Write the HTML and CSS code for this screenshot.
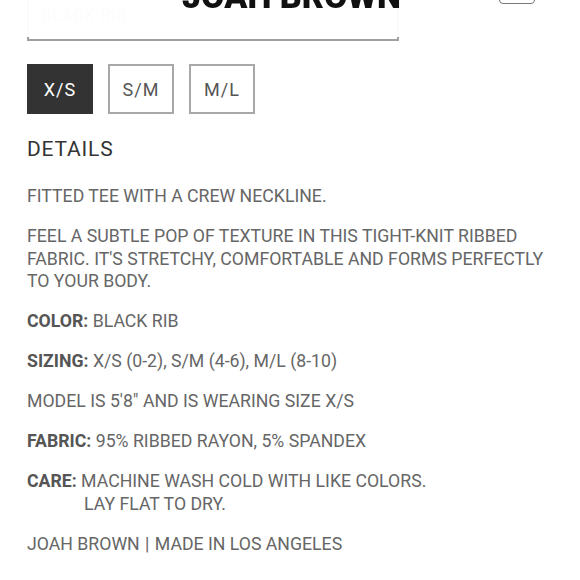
FILE: index.html
```html
<!DOCTYPE html>
<html>
<head>
<meta charset="utf-8">
<link rel="stylesheet" href="styles.css">
</head>
<body>
<header class="topbar">
  <div class="logo">JOAH BROWN</div>
  <div class="cart"></div>
</header>
<main class="product">
  <div class="select">BLACK RIB</div>
  <div class="sizes">
    <button class="size active">X/S</button>
    <button class="size">S/M</button>
    <button class="size">M/L</button>
  </div>
  <h2 class="details-title">DETAILS</h2>
  <div class="details">
    <p>FITTED TEE WITH A CREW NECKLINE.</p>
    <p>FEEL A SUBTLE POP OF TEXTURE IN THIS TIGHT-KNIT RIBBED<br>FABRIC. IT'S STRETCHY, COMFORTABLE AND FORMS PERFECTLY<br>TO YOUR BODY.</p>
    <p><b>COLOR:</b> BLACK RIB</p>
    <p><b>SIZING:</b> X/S (0-2), S/M (4-6), M/L (8-10)</p>
    <p>MODEL IS 5'8" AND IS WEARING SIZE X/S</p>
    <p><b>FABRIC:</b> 95% RIBBED RAYON, 5% SPANDEX</p>
    <p><b>CARE:</b> MACHINE WASH COLD WITH LIKE COLORS.<br><span class="indent">LAY FLAT TO DRY.</span></p>
    <p>JOAH BROWN <span class="sep">|</span> MADE IN LOS ANGELES</p>
  </div>
</main>
</body>
</html>
```
FILE: styles.css
```css
html, body {
  margin: 0;
  padding: 0;
  background: #fff;
  font-family: Roboto, "Liberation Sans", sans-serif;
}
.topbar {
  position: fixed;
  top: 0;
  left: 0;
  right: 0;
  height: 37px;
  background: rgba(255, 255, 255, 0.96);
  z-index: 2;
}
.logo {
  position: absolute;
  left: 182px;
  top: -21px;
  font-size: 34px;
  line-height: 34px;
  font-weight: 900;
  color: #111;
  letter-spacing: 0;
}
.cart {
  position: absolute;
  left: 499px;
  top: -30px;
  width: 34px;
  height: 32px;
  border: 1px solid #777;
  border-radius: 4px;
}
.product {
  padding: 0 27px;
  display: flex;
  flex-direction: column;
  align-items: flex-start;
}
.select {
  margin-top: -14px;
  box-sizing: border-box;
  width: 372px;
  height: 55px;
  border: 2px solid #a0a0a0;
  padding: 18px 12px 0;
  font-size: 16px;
  letter-spacing: 1px;
  color: #aaa;
}
.sizes {
  margin-top: 23px;
  display: flex;
  gap: 15px;
}
.size {
  box-sizing: border-box;
  width: 66px;
  height: 50px;
  border: 2px solid #a8a8a8;
  background: #fff;
  color: #555;
  font-family: Roboto, "Liberation Sans", sans-serif;
  font-size: 18px;
  letter-spacing: 1px;
  padding: 0;
}
.size.active {
  background: #333;
  border-color: #333;
  color: #fff;
}
.details-title {
  margin: 23px 0 0;
  font-size: 21px;
  line-height: 25px;
  font-weight: 400;
  letter-spacing: 0.8px;
  color: #333;
}
.details {
  margin-top: 23px;
  font-size: 17.7px;
  line-height: 22.5px;
  color: #666;
}
.details p {
  margin: 0 0 17.5px;
  white-space: nowrap;
}
.details b {
  font-weight: 700;
  color: #555;
}
.sep {
  margin: 0 1px;
}
.indent {
  display: inline-block;
  margin-left: 57px;
}
```
